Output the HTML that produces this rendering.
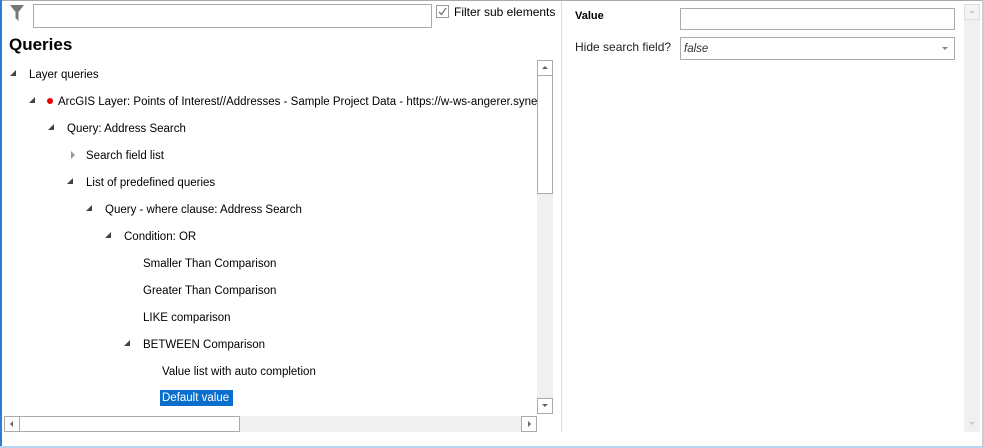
<!DOCTYPE html>
<html><head><meta charset="utf-8"><style>
*{margin:0;padding:0;box-sizing:border-box}
body{width:984px;height:448px;position:relative;background:#fff;font-family:"Liberation Sans",sans-serif;font-size:11.5px;color:#000;overflow:hidden}
.a{position:absolute}
.t{position:absolute;white-space:nowrap;line-height:14px}
.ex{position:absolute;width:0;height:0;border-left:6px solid transparent;border-bottom:6px solid #444}
.col{position:absolute;width:0;height:0;border-top:4px solid transparent;border-bottom:4px solid transparent;border-left:4px solid #999}
#tree{position:absolute;left:0;top:60px;width:537px;height:354px;overflow:hidden}
#tree>*{margin-top:-60px}
</style></head><body>
<div class="a" style="left:0;top:0;width:984px;height:1px;background:#aaa"></div>
<div class="a" style="left:0;top:0;width:2px;height:448px;background:#2b7cd3"></div>
<div class="a" style="left:0;top:446px;width:984px;height:2px;background:#b8d6f0"></div>
<div class="a" style="left:982px;top:0;width:2px;height:448px;background:#ccc"></div>
<svg class="a" style="left:10px;top:5px" width="14" height="17"><path d="M0 0H14L8.5 7V16L5.5 13V7Z" fill="#777"/></svg>
<div class="a" style="left:33px;top:4px;width:399px;height:24px;border:1px solid #aaa"></div>
<div class="a" style="left:436px;top:5px;width:13px;height:13px;border:1px solid #999"></div>
<svg class="a" style="left:438px;top:7px" width="9" height="9"><path d="M1 5L3.5 7.5L8 1" stroke="#777" stroke-width="1.3" fill="none"/></svg>
<div class="t" style="left:454px;top:5px;font-size:12px">Filter sub elements</div>
<div class="t" style="left:9px;top:36px;font-size:17px;font-weight:bold;line-height:18px">Queries</div>

<div id="tree"><div style="position:relative;height:414px">
<div class="ex" style="left:10px;top:70px"></div><div class="t" style="left:29px;top:68px">Layer queries</div>
<div class="ex" style="left:29px;top:97px"></div><div class="a" style="left:47px;top:98px;width:6px;height:6px;border-radius:3px;background:#e00"></div><div class="t" style="left:58px;top:95px">ArcGIS Layer: Points of Interest//Addresses - Sample Project Data - https://w-ws-angerer.syner</div>
<div class="ex" style="left:48px;top:124px"></div><div class="t" style="left:67px;top:122px">Query: Address Search</div>
<div class="col" style="left:71px;top:151px"></div><div class="t" style="left:86px;top:149px">Search field list</div>
<div class="ex" style="left:67px;top:178px"></div><div class="t" style="left:86px;top:176px">List of predefined queries</div>
<div class="ex" style="left:86px;top:205px"></div><div class="t" style="left:105px;top:203px">Query - where clause: Address Search</div>
<div class="ex" style="left:105px;top:232px"></div><div class="t" style="left:124px;top:230px">Condition: OR</div>
<div class="t" style="left:143px;top:257px">Smaller Than Comparison</div>
<div class="t" style="left:143px;top:284px">Greater Than Comparison</div>
<div class="t" style="left:143px;top:311px">LIKE comparison</div>
<div class="ex" style="left:124px;top:340px"></div><div class="t" style="left:143px;top:338px">BETWEEN Comparison</div>
<div class="t" style="left:162px;top:365px">Value list with auto completion</div>
<div class="a" style="left:160px;top:390px;width:73px;height:16px;background:#0a6fcc"></div>
<div class="t" style="left:162px;top:391px;color:#fff">Default value</div>
</div></div>

<div class="a" style="left:537px;top:60px;width:16px;height:354px;background:#f0f0f0"></div>
<div class="a" style="left:537px;top:60px;width:16px;height:16px;border:1px solid #aaa;background:#fff"></div>
<div class="a" style="left:542px;top:66px;border-left:3px solid transparent;border-right:3px solid transparent;border-bottom:3px solid #666"></div>
<div class="a" style="left:537px;top:75px;width:16px;height:119px;border:1px solid #aaa;background:#fff"></div>
<div class="a" style="left:537px;top:398px;width:16px;height:16px;border:1px solid #aaa;background:#fff"></div>
<div class="a" style="left:542px;top:404px;border-left:3px solid transparent;border-right:3px solid transparent;border-top:3px solid #666"></div>

<div class="a" style="left:4px;top:416px;width:533px;height:16px;background:#f0f0f0"></div>
<div class="a" style="left:4px;top:416px;width:16px;height:16px;border:1px solid #aaa;background:#fff"></div>
<div class="a" style="left:10px;top:421px;border-top:3px solid transparent;border-bottom:3px solid transparent;border-right:3px solid #666"></div>
<div class="a" style="left:19px;top:416px;width:221px;height:16px;border:1px solid #aaa;background:#fff"></div>
<div class="a" style="left:521px;top:416px;width:16px;height:16px;border:1px solid #aaa;background:#fff"></div>
<div class="a" style="left:528px;top:421px;border-top:3px solid transparent;border-bottom:3px solid transparent;border-left:3px solid #666"></div>

<div class="a" style="left:561px;top:1px;width:1px;height:431px;background:#ddd"></div>
<div class="t" style="left:575px;top:9px;font-weight:bold;font-size:11px">Value</div>
<div class="a" style="left:680px;top:8px;width:275px;height:22px;border:1px solid #aaa"></div>
<div class="t" style="left:575px;top:40px;font-size:12px;color:#222">Hide search field?</div>
<div class="a" style="left:680px;top:37px;width:275px;height:23px;border:1px solid #aaa"></div>
<div class="t" style="left:684px;top:42px;font-style:italic;color:#333">false</div>
<div class="a" style="left:942px;top:47px;border-left:3px solid transparent;border-right:3px solid transparent;border-top:3px solid #888"></div>
<div class="a" style="left:964px;top:4px;width:16px;height:428px;background:#f0f0f0"></div>
<div class="a" style="left:964px;top:4px;width:16px;height:16px;border:1px solid #ddd;background:#f4f4f4"></div>
<div class="a" style="left:969px;top:10px;border-left:3px solid transparent;border-right:3px solid transparent;border-bottom:3px solid #ccc"></div>
<div class="a" style="left:969px;top:422px;border-left:3px solid transparent;border-right:3px solid transparent;border-top:3px solid #ccc"></div>
</body></html>
